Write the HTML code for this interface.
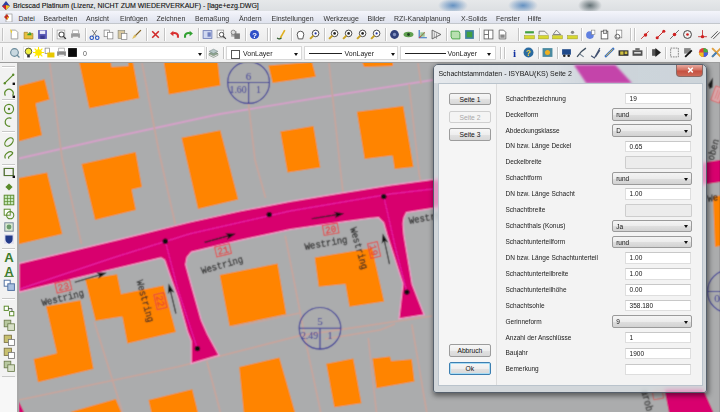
<!DOCTYPE html><html><head><meta charset="utf-8"><style>

*{margin:0;padding:0;box-sizing:border-box}
html,body{width:720px;height:412px;overflow:hidden;background:#f0f0f0;font-family:"Liberation Sans", sans-serif}
.abs{position:absolute}
svg{display:block}
#map{position:absolute;left:0;top:0;width:720px;height:412px;clip-path:polygon(19px 63.2px,720px 63.2px,720px 412px,19px 412px)}
#title{position:absolute;left:0;top:0;width:720px;height:11.5px;background:linear-gradient(#e6e8ea,#dcdfe2);border-bottom:1px solid #aeb3b8;font-size:7px;color:#111;line-height:11px;-webkit-text-stroke:0.12px #111}
#menu{position:absolute;left:0;top:11px;width:720px;height:13px;background:linear-gradient(#f4f5fb,#dfe3ee);border-bottom:1px solid #c3c7cc;font-size:7px;color:#333;line-height:13px}
#menu span{position:absolute;top:0.6px}
#tb1{position:absolute;left:0;top:24px;width:720px;height:19px;background:linear-gradient(#f6f6f6,#ececec);border-bottom:1px solid #c9c9c9}
#tb2{position:absolute;left:0;top:43px;width:720px;height:20.3px;background:linear-gradient(#f7f7f7,#efefef);border-bottom:1.7px solid #9c9c9c}
#lt{position:absolute;left:0;top:63.2px;width:19px;height:350px;background:#f2f2f2;border-right:2px solid #a8a8a8}
.sep{position:absolute;width:2px;background:#c4c4c4;border-right:1px solid #fff}
.hsep{position:absolute;height:2px;background:#c8c8c8;border-bottom:1px solid #fff}
.ic{position:absolute;width:10px;height:10px}
.dd{position:absolute;background:#fff;border:1px solid #d8d8d8;font-size:7px;color:#222;line-height:13px}
.arr{position:absolute;width:0;height:0;border-left:2.5px solid transparent;border-right:2.5px solid transparent;border-top:3px solid #111}

</style></head><body><div id="wrap" style="position:absolute;left:0;top:0;width:720px;height:412px">
<div id="map"><svg width="720" height="412" viewBox="0 0 720 412"><defs><filter id="sb" x="0" y="0" width="1" height="1"><feConvolveMatrix order="3" kernelMatrix="1 2 1 2 8 2 1 2 1" divisor="20" edgeMode="duplicate" preserveAlpha="true"/></filter></defs><g filter="url(#sb)"><rect x="0" y="0" width="720" height="412" fill="#abacad"/><polyline points="19,158.5 100,140 220,114 320,97.5 433,80" fill="none" stroke="#d4a0c8" stroke-width="1.8" opacity="1"/><polyline points="49.7,63 62,158 81.5,244" fill="none" stroke="#c8a49c" stroke-width="1.6" opacity="1"/><polyline points="142,63 158.6,150 175.2,224" fill="none" stroke="#c8a49c" stroke-width="1.6" opacity="1"/><polyline points="248.4,103 255,160 265.6,198" fill="none" stroke="#c8a49c" stroke-width="1.6" opacity="1"/><polyline points="329,63 341,175 344,200" fill="none" stroke="#c8a49c" stroke-width="1.6" opacity="1"/><polyline points="418,63 421,84" fill="none" stroke="#c8a49c" stroke-width="1.6" opacity="1"/><polyline points="409,84 419.3,175 421,182" fill="none" stroke="#c8a49c" stroke-width="1.6" opacity="1"/><polyline points="285.2,235.6 298.4,303.4 307.2,348.9 320.7,412" fill="none" stroke="#c8a49c" stroke-width="1.6" opacity="1"/><polyline points="94.3,321.7 122.4,412" fill="none" stroke="#c8a49c" stroke-width="1.6" opacity="1"/><polyline points="206.9,361.3 220.3,412" fill="none" stroke="#c8a49c" stroke-width="1.6" opacity="1"/><polyline points="368.3,338 376.4,412" fill="none" stroke="#c8a49c" stroke-width="1.6" opacity="1"/><polyline points="411.8,324.4 426.7,412" fill="none" stroke="#c8a49c" stroke-width="1.6" opacity="1"/><polyline points="19,400 178,366.7 300,335.6 432,316" fill="none" stroke="#c8a49c" stroke-width="1.6" opacity="1"/><polyline points="232,327 300,313" fill="none" stroke="#c8a49c" stroke-width="1.6" opacity="1"/><polyline points="325,339 380,330 395,324" fill="none" stroke="#c8a49c" stroke-width="1.6" opacity="1"/><polygon points="18.6,86 44.6,79.2 49.7,99.6 35.7,103.4 42,135.3 18.6,141.6" fill="#ff8400"/><polygon points="79,62 133,62 139.5,98.3 89.2,108.5" fill="#ff8400"/><polygon points="163.7,62 217.8,62 220.4,85.6 168.8,94.5" fill="#ff8400"/><polygon points="268.4,65.5 312.1,62 315.9,76.7 272.6,83" fill="#ff8400"/><polygon points="362,62 393,62 393,66 364,67" fill="#ff8400"/><polygon points="356.8,111.8 403.3,105.9 413.5,167 394.6,169.1 392.5,155.4 364.6,158.9" fill="#ff8400"/><polygon points="280.3,131.4 313.5,126 320.4,167.5 287.5,172.5" fill="#ff8400"/><polygon points="181.5,137.8 220.4,130.2 238.3,199.5 198,209.1" fill="#ff8400"/><polygon points="18.6,178 47.1,172.4 62.4,234.1 18.6,244.3" fill="#ff8400"/><polygon points="81.5,164 135.7,152 142,187 131.8,189.5 135.9,210 95,220" fill="#ff8400"/><polygon points="46,306.2 80.5,300.3 93.6,368.9 38,382.2 33.6,358.9 56.9,353.3" fill="#ff8400"/><polygon points="85.2,279.4 117.1,274.3 121.2,293.9 163.5,285.6 175.9,332 127.4,343.4 122.3,316.5 95.5,320.7" fill="#ff8400"/><polygon points="70.2,412 115.8,398.9 121.3,412" fill="#ff8400"/><polygon points="219.7,275 277.6,263.6 286.3,314.3 229.5,326.3" fill="#ff8400"/><polygon points="314.7,257.4 372.1,248.1 384.2,301.5 349.4,306.8 345.4,284.1 318.7,286.8" fill="#ff8400"/><polygon points="326.2,363.8 353.3,358.4 361.5,403.2 334.3,407.3" fill="#ff8400"/><polygon points="372.4,358.4 390,356.5 391.4,361.1 411.8,359.2 414.5,381.5 376.4,388.3" fill="#ff8400"/><polygon points="239.2,366.9 279.4,357.5 295,412 243.7,412" fill="#ff8400"/><polygon points="148.5,400 192.3,389.2 197.9,412 151.3,412" fill="#ff8400"/><polygon points="713,196.5 720,195.5 720,246 715,247" fill="#ff8400"/><polygon points="111,62 128,62 128.5,66 111.5,67" fill="#abacad"/><polygon points="19,263.4 118,239.7 190,222 240,211 290,201.4 340,193.2 390,185.2 433,179.4 520,172 707,162.7 707,184.5 520,199 432.9,208.3 406.5,212.6 404,217.7 403.1,223.6 404,235 412.2,284.1 424.2,314.8 398.9,318.9 402.9,284.1 387,235 383.6,222.8 378.5,217.7 370,218.4 340,222.4 290,229.7 240,240.3 191.5,252.1 187.1,257.2 185.7,264.5 188.6,275 201.3,320 207.5,334 219.1,355.3 191.2,363.6 191.2,341 187.4,331.6 178,298 169.7,275 164.6,260.1 161,257.8 110,270 19,292.2" fill="#d8006e" stroke="#f0a0cc" stroke-width="1.2"/><polygon points="700,163 720,160 720,182 700,185" fill="#d8006e"/><polygon points="664.4,389 703,389 713.3,412 668.9,412" fill="#d8006e"/><polygon points="18.6,401 24,412 18.6,412" fill="#d8006e"/><polyline points="20,289 110,258.7 190,233.7 290,211 390,194 433,189" fill="none" stroke="#e41aa2" stroke-width="1.5"/><polyline points="165.3,241.2 178,290 197.4,348.6" fill="none" stroke="#e41aa2" stroke-width="1.3"/><polyline points="383.8,196.6 396,250 406.9,292.1" fill="none" stroke="#e41aa2" stroke-width="1.3"/><circle cx="165.3" cy="241.2" r="2.7" fill="#0a0a0a"/><circle cx="269.2" cy="214.6" r="2.7" fill="#0a0a0a"/><circle cx="383.8" cy="196.6" r="2.7" fill="#0a0a0a"/><circle cx="197.4" cy="348.6" r="2.7" fill="#0a0a0a"/><circle cx="406.9" cy="292.1" r="2.7" fill="#0a0a0a"/><line x1="74.8" y1="282.2" x2="101.04323439366138" y2="274.49104989686197" stroke="#1a1a1a" stroke-width="1.1"/><polygon points="106.8,272.8 98.1354680993764,278.7846375782562 99.60404299207673,274.9138123710775 96.27531321282822,272.45219541128375" fill="#111"/><line x1="204.6" y1="242.4" x2="230.0157166449386" y2="235.39438579658744" stroke="#1a1a1a" stroke-width="1.1"/><polygon points="235.8,233.8 227.03643992968748,239.63866550626284 228.56964580617327,235.7929822457343 225.28261555344127,233.2759538156953" fill="#111"/><line x1="311.8" y1="218.7" x2="338.2786995557043" y2="214.3686077887274" stroke="#1a1a1a" stroke-width="1.1"/><polygon points="344.2,213.4 334.86390020997385,218.2710615589083 336.7983744446303,214.61075973590923 333.79843164237377,211.75763107018298" fill="#111"/><line x1="175.9" y1="313.5" x2="170.1046645196077" y2="289.43325960225974" stroke="#1a1a1a" stroke-width="1.1"/><polygon points="168.7,283.6 174.24940031392234,292.54953385131535 170.4558306495096,290.89157450282465 167.83281475143664,294.09466482288383" fill="#111"/><line x1="389.5" y1="264.1" x2="384.079333846993" y2="239.26202225413195" stroke="#1a1a1a" stroke-width="1.1"/><polygon points="382.8,233.4 388.1563353180942,242.4664034743738 384.3991673087412,240.72752781766494 381.70811083854903,243.87367070606604" fill="#111"/><polygon points="713,77.5 708,84.5 709.5,89 712.5,87.5" fill="#1a1a1a"/><g transform="translate(63.4,286.5) rotate(-13)"><rect x="-7.5" y="-5" width="15" height="10" fill="none" stroke="#e84040" stroke-width="1"/><text x="0" y="3.3" font-family="Liberation Mono" font-size="9.5" fill="#e83838" text-anchor="middle" stroke="#e83838" stroke-width="0.2">23</text></g><g transform="translate(223,250.3) rotate(-13)"><rect x="-7.5" y="-5" width="15" height="10" fill="none" stroke="#e84040" stroke-width="1"/><text x="0" y="3.3" font-family="Liberation Mono" font-size="9.5" fill="#e83838" text-anchor="middle" stroke="#e83838" stroke-width="0.2">21</text></g><g transform="translate(330.7,229.3) rotate(-10)"><rect x="-7.5" y="-5" width="15" height="10" fill="none" stroke="#e84040" stroke-width="1"/><text x="0" y="3.3" font-family="Liberation Mono" font-size="9.5" fill="#e83838" text-anchor="middle" stroke="#e83838" stroke-width="0.2">20</text></g><g transform="translate(160.4,301.1) rotate(77)"><rect x="-7.5" y="-5" width="15" height="10" fill="none" stroke="#e84040" stroke-width="1"/><text x="0" y="3.3" font-family="Liberation Mono" font-size="9.5" fill="#e83838" text-anchor="middle" stroke="#e83838" stroke-width="0.2">22</text></g><g transform="translate(374.1,250) rotate(77)"><rect x="-7.5" y="-5" width="15" height="10" fill="none" stroke="#e84040" stroke-width="1"/><text x="0" y="3.3" font-family="Liberation Mono" font-size="9.5" fill="#e83838" text-anchor="middle" stroke="#e83838" stroke-width="0.2">19</text></g><g transform="translate(717.5,94.5) rotate(-70)"><rect x="-7.5" y="-4.5" width="15" height="9" fill="#d8a8ac" stroke="#e06060" stroke-width="0.8"/><line x1="-5" y1="-1" x2="5" y2="-1" stroke="#e06060" stroke-width=".6"/><line x1="-5" y1="1.5" x2="5" y2="1.5" stroke="#e06060" stroke-width=".6"/></g><g transform="translate(658,395) rotate(-10)"><rect x="-5" y="-4" width="10" height="8" fill="none" stroke="#e05050" stroke-width="0.7"/></g><text transform="translate(42.6,306) rotate(-13.6)" font-family="Liberation Mono" font-size="10" fill="#222" stroke="#222" stroke-width="0.2" textLength="43.2" lengthAdjust="spacingAndGlyphs">Westring</text><text transform="translate(202.2,274) rotate(-16)" font-family="Liberation Mono" font-size="10" fill="#222" stroke="#222" stroke-width="0.2" textLength="43.2" lengthAdjust="spacingAndGlyphs">Westring</text><text transform="translate(305.3,250) rotate(-10)" font-family="Liberation Mono" font-size="10" fill="#222" stroke="#222" stroke-width="0.2" textLength="43.2" lengthAdjust="spacingAndGlyphs">Westring</text><text transform="translate(409.4,224) rotate(-10)" font-family="Liberation Mono" font-size="10" fill="#222" stroke="#222" stroke-width="0.2" textLength="43.2" lengthAdjust="spacingAndGlyphs">Westring</text><text transform="translate(136.5,281) rotate(74.7)" font-family="Liberation Mono" font-size="10" fill="#222" stroke="#222" stroke-width="0.2" textLength="43.2" lengthAdjust="spacingAndGlyphs">Westring</text><text transform="translate(350,228.5) rotate(73.7)" font-family="Liberation Mono" font-size="10" fill="#222" stroke="#222" stroke-width="0.2" textLength="43.2" lengthAdjust="spacingAndGlyphs">Westring</text><text transform="translate(708,202) rotate(-10)" font-family="Liberation Mono" font-size="10" fill="#222" stroke="#222" stroke-width="0.2" textLength="10.8" lengthAdjust="spacingAndGlyphs">We</text><text transform="translate(713.5,161) rotate(-75)" font-family="Liberation Mono" font-size="10" fill="#222" stroke="#222" stroke-width="0.2" textLength="21.6" lengthAdjust="spacingAndGlyphs">oben</text><text transform="translate(641,391) rotate(75)" font-family="Liberation Mono" font-size="10" fill="#222" stroke="#222" stroke-width="0.2" textLength="21.6" lengthAdjust="spacingAndGlyphs">arob</text><circle cx="248.6" cy="82.5" r="20.9" fill="none" stroke="#323296" stroke-width="1.1"/><line x1="227.7" y1="82.5" x2="269.5" y2="82.5" stroke="#323296" stroke-width="1.1"/><line x1="248.6" y1="82.5" x2="248.6" y2="103.4" stroke="#323296" stroke-width="1.1"/><text x="248.6" y="79.5" font-family="Liberation Serif" font-size="11" fill="#323296" text-anchor="middle">6</text><text x="238.1" y="93.0" font-family="Liberation Serif" font-size="10" fill="#323296" text-anchor="middle" textLength="17.2" lengthAdjust="spacingAndGlyphs">1.60</text><text x="258.6" y="93.0" font-family="Liberation Serif" font-size="10" fill="#323296" text-anchor="middle">1</text><circle cx="320" cy="328.3" r="20.8" fill="none" stroke="#323296" stroke-width="1.1"/><line x1="299.2" y1="328.3" x2="340.8" y2="328.3" stroke="#323296" stroke-width="1.1"/><line x1="320" y1="328.3" x2="320" y2="349.1" stroke="#323296" stroke-width="1.1"/><text x="320" y="325.3" font-family="Liberation Serif" font-size="11" fill="#323296" text-anchor="middle">5</text><text x="309.5" y="338.8" font-family="Liberation Serif" font-size="10" fill="#323296" text-anchor="middle" textLength="17.2" lengthAdjust="spacingAndGlyphs">2.49</text><text x="330" y="338.8" font-family="Liberation Serif" font-size="10" fill="#323296" text-anchor="middle">1</text><circle cx="729" cy="291.5" r="21.5" fill="none" stroke="#323296" stroke-width="1.1"/><line x1="707.5" y1="291.5" x2="750.5" y2="291.5" stroke="#323296" stroke-width="1.1"/><line x1="729" y1="291.5" x2="729" y2="313.0" stroke="#323296" stroke-width="1.1"/><text x="729" y="288.5" font-family="Liberation Serif" font-size="11" fill="#323296" text-anchor="middle"></text><text x="718.5" y="302.0" font-family="Liberation Serif" font-size="10" fill="#323296" text-anchor="middle" textLength="8.6" lengthAdjust="spacingAndGlyphs">0.</text><text x="739" y="302.0" font-family="Liberation Serif" font-size="10" fill="#323296" text-anchor="middle"></text></g></svg></div>
<div id="title"><div class="abs" style="left:438px;top:-2px;width:30px;height:15px;background:radial-gradient(closest-side,rgba(70,125,185,.8),rgba(70,125,185,0))"></div><div class="abs" style="left:508px;top:-2px;width:30px;height:15px;background:radial-gradient(closest-side,rgba(70,125,185,.8),rgba(70,125,185,0))"></div><div class="abs" style="left:578px;top:-2px;width:24px;height:15px;background:radial-gradient(closest-side,rgba(80,95,100,.85),rgba(80,95,100,0))"></div>
<div class="abs" style="left:2px;top:1px;width:8px;height:9px"><svg width="8" height="9"><polygon points="4,0 8,5 4,9 0,5" fill="#2a3fa0"/><polygon points="0,5 4,9 4,4" fill="#d02020"/><polygon points="4,4 8,5 4,9" fill="#f0c020"/></svg></div>
<span class="abs" style="left:13px;top:0">Bricscad Platinum (Lizenz, NICHT ZUM WIEDERVERKAUF) - [lage+ezg.DWG]</span></div>
<div id="menu">
<div class="abs" style="left:4px;top:2px;width:9px;height:9px"><svg width="9" height="9"><rect x="2" y="1" width="6" height="8" fill="#fff" stroke="#888" stroke-width=".6"/><polygon points="0,4 3,1 5,4 3,7" fill="#c03020"/><polygon points="3,4 5,4 3,7" fill="#e8b020"/></svg></div>
<span style="left:18.5px">Datei</span>
<span style="left:43.5px">Bearbeiten</span>
<span style="left:86px">Ansicht</span>
<span style="left:120px">Einfügen</span>
<span style="left:156.5px">Zeichnen</span>
<span style="left:195px">Bemaßung</span>
<span style="left:239px">Ändern</span>
<span style="left:271.5px">Einstellungen</span>
<span style="left:323.5px">Werkzeuge</span>
<span style="left:367.5px">Bilder</span>
<span style="left:394px">RZI-Kanalplanung</span>
<span style="left:461px">X-Solids</span>
<span style="left:496px">Fenster</span>
<span style="left:527.5px">Hilfe</span>
</div>
<div id="tb1"></div>
<div id="tb2"></div>
<div class="abs" style="left:2px;top:28px;width:2px;height:13px;background:#c4c4c4;border-right:1px solid #fafafa"></div>
<div class="abs" style="left:2px;top:47px;width:2px;height:13px;background:#c4c4c4;border-right:1px solid #fafafa"></div>
<div class="abs" style="left:8.9px;top:28.799999999999997px;width:11px;height:11px"><svg width="11" height="11" viewBox="0 0 10 10" style="overflow:visible"><path d="M2,1 h4 l2,2 v6 h-6z" fill="#fff" stroke="#8a8a8a" stroke-width=".7"/><path d="M1,0 l2,2 l-1,2z" fill="#f0d020"/></svg></div>
<div class="abs" style="left:22.5px;top:28.799999999999997px;width:11px;height:11px"><svg width="11" height="11" viewBox="0 0 10 10" style="overflow:visible"><path d="M1,3 h3 l1,1 h4 v5 h-8z" fill="#e8c040" stroke="#9a7a20" stroke-width=".6"/><path d="M4,5 l3,0 l-1,-2" fill="none" stroke="#30a030" stroke-width="1.2"/></svg></div>
<div class="abs" style="left:37.3px;top:28.799999999999997px;width:11px;height:11px"><svg width="11" height="11" viewBox="0 0 10 10" style="overflow:visible"><rect x="1" y="1" width="8" height="8" fill="#5a5ab8"/><rect x="2.5" y="1.5" width="5" height="3" fill="#e8e8f8"/><rect x="3" y="6" width="4" height="3" fill="#3a3a90"/></svg></div>
<div class="abs" style="left:55.9px;top:28.799999999999997px;width:11px;height:11px"><svg width="11" height="11" viewBox="0 0 10 10" style="overflow:visible"><rect x="1" y="1" width="7" height="8" fill="#fff" stroke="#999" stroke-width=".6"/><circle cx="5" cy="5" r="2.3" fill="none" stroke="#555" stroke-width="1"/><line x1="6.7" y1="6.7" x2="9" y2="9" stroke="#333" stroke-width="1.2"/></svg></div>
<div class="abs" style="left:70.0px;top:28.799999999999997px;width:11px;height:11px"><svg width="11" height="11" viewBox="0 0 10 10" style="overflow:visible"><rect x="1" y="4" width="8" height="4" fill="#9a9a9a"/><rect x="2.5" y="1" width="5" height="3" fill="#fff" stroke="#888" stroke-width=".5"/><rect x="2.5" y="7" width="5" height="2" fill="#eee"/></svg></div>
<div class="abs" style="left:88.8px;top:28.799999999999997px;width:11px;height:11px"><svg width="11" height="11" viewBox="0 0 10 10" style="overflow:visible"><line x1="3" y1="1" x2="7" y2="7" stroke="#666" stroke-width=".8"/><line x1="7" y1="1" x2="3" y2="7" stroke="#666" stroke-width=".8"/><circle cx="2.5" cy="8" r="1.6" fill="none" stroke="#2050c0" stroke-width="1"/><circle cx="7.5" cy="8" r="1.6" fill="none" stroke="#2050c0" stroke-width="1"/></svg></div>
<div class="abs" style="left:103.4px;top:28.799999999999997px;width:11px;height:11px"><svg width="11" height="11" viewBox="0 0 10 10" style="overflow:visible"><rect x="1" y="1" width="5" height="6" fill="#fff" stroke="#777" stroke-width=".6"/><rect x="4" y="3" width="5" height="6" fill="#fff" stroke="#777" stroke-width=".6"/></svg></div>
<div class="abs" style="left:117.3px;top:28.799999999999997px;width:11px;height:11px"><svg width="11" height="11" viewBox="0 0 10 10" style="overflow:visible"><rect x="1" y="1.5" width="6" height="7" fill="#d8c8a0" stroke="#887" stroke-width=".6"/><rect x="4" y="4" width="5" height="5.5" fill="#fff" stroke="#777" stroke-width=".6"/></svg></div>
<div class="abs" style="left:131.2px;top:28.799999999999997px;width:11px;height:11px"><svg width="11" height="11" viewBox="0 0 10 10" style="overflow:visible"><line x1="9" y1="1" x2="4" y2="6" stroke="#806020" stroke-width="1.2"/><path d="M1,9 l2,-4 l2,2z" fill="#e0c060"/></svg></div>
<div class="abs" style="left:150.2px;top:28.799999999999997px;width:11px;height:11px"><svg width="11" height="11" viewBox="0 0 10 10" style="overflow:visible"><path d="M2,2 L8,8 M8,2 L2,8" stroke="#d02828" stroke-width="1.4"/></svg></div>
<div class="abs" style="left:169.2px;top:28.799999999999997px;width:11px;height:11px"><svg width="11" height="11" viewBox="0 0 10 10" style="overflow:visible"><path d="M8,8 C9,4 6,3 3,4" fill="none" stroke="#d83030" stroke-width="1.8"/><polygon points="1,4 4,1.5 4,6.5" fill="#d83030"/></svg></div>
<div class="abs" style="left:182.7px;top:28.799999999999997px;width:11px;height:11px"><svg width="11" height="11" viewBox="0 0 10 10" style="overflow:visible"><path d="M2,8 C1,4 4,3 7,4" fill="none" stroke="#30a030" stroke-width="1.8"/><polygon points="9,4 6,1.5 6,6.5" fill="#30a030"/></svg></div>
<div class="abs" style="left:201.7px;top:28.799999999999997px;width:11px;height:11px"><svg width="11" height="11" viewBox="0 0 10 10" style="overflow:visible"><rect x="1" y="1.5" width="8" height="7" fill="#d0d8f0" stroke="#6070b0" stroke-width=".7"/><rect x="5" y="3" width="3" height="4" fill="#7080c0"/></svg></div>
<div class="abs" style="left:216.1px;top:28.799999999999997px;width:11px;height:11px"><svg width="11" height="11" viewBox="0 0 10 10" style="overflow:visible"><rect x="1" y="1" width="6" height="7" fill="#fff" stroke="#888" stroke-width=".6"/><circle cx="5" cy="5" r="2" fill="none" stroke="#555" stroke-width=".9"/><line x1="6.5" y1="6.5" x2="9" y2="9" stroke="#444" stroke-width="1"/></svg></div>
<div class="abs" style="left:229.6px;top:28.799999999999997px;width:11px;height:11px"><svg width="11" height="11" viewBox="0 0 10 10" style="overflow:visible"><rect x="1" y="2" width="5" height="5" fill="#aaa"/><rect x="4" y="4" width="5" height="5" fill="#777"/><circle cx="3" cy="3" r="2" fill="#ddd" stroke="#555" stroke-width=".5"/></svg></div>
<div class="abs" style="left:249.0px;top:28.799999999999997px;width:11px;height:11px"><svg width="11" height="11" viewBox="0 0 10 10" style="overflow:visible"><circle cx="5" cy="5" r="4.2" fill="#3050c8"/><text x="5" y="7.8" font-size="7" font-family="Liberation Sans" font-weight="bold" fill="#fff" text-anchor="middle">?</text></svg></div>
<div class="abs" style="left:276.1px;top:28.799999999999997px;width:11px;height:11px"><svg width="11" height="11" viewBox="0 0 10 10" style="overflow:visible"><path d="M8,1 L4,8" stroke="#e0b020" stroke-width="1.5"/><path d="M1,8 q2,2 4,0" fill="none" stroke="#205020" stroke-width="1"/></svg></div>
<div class="abs" style="left:295.1px;top:28.799999999999997px;width:11px;height:11px"><svg width="11" height="11" viewBox="0 0 10 10" style="overflow:visible"><path d="M2,5 q0,-3 3,-3 q3,0 3,3 l-1,4 h-4z" fill="#fff" stroke="#444" stroke-width=".8"/></svg></div>
<div class="abs" style="left:308.6px;top:28.799999999999997px;width:11px;height:11px"><svg width="11" height="11" viewBox="0 0 10 10" style="overflow:visible"><circle cx="6" cy="4" r="3" fill="#fff" stroke="#333" stroke-width=".8"/><line x1="4" y1="6" x2="1" y2="9" stroke="#c8a020" stroke-width="1.8"/><circle cx="6" cy="4" r="1" fill="#2030a0"/></svg></div>
<div class="abs" style="left:327.9px;top:28.799999999999997px;width:11px;height:11px"><svg width="11" height="11" viewBox="0 0 10 10" style="overflow:visible"><circle cx="6" cy="4" r="3" fill="#fff" stroke="#333" stroke-width=".8"/><line x1="4" y1="6" x2="1" y2="9" stroke="#c8a020" stroke-width="1.8"/><circle cx="6" cy="4" r="1.2" fill="#222"/></svg></div>
<div class="abs" style="left:342.0px;top:28.799999999999997px;width:11px;height:11px"><svg width="11" height="11" viewBox="0 0 10 10" style="overflow:visible"><circle cx="6" cy="4" r="3" fill="#fff" stroke="#333" stroke-width=".8"/><line x1="4" y1="6" x2="1" y2="9" stroke="#c8a020" stroke-width="1.8"/><circle cx="6" cy="4" r="1.2" fill="#222"/></svg></div>
<div class="abs" style="left:356.1px;top:28.799999999999997px;width:11px;height:11px"><svg width="11" height="11" viewBox="0 0 10 10" style="overflow:visible"><circle cx="6" cy="4" r="3" fill="#fff" stroke="#333" stroke-width=".8"/><line x1="4" y1="6" x2="1" y2="9" stroke="#c8a020" stroke-width="1.8"/><circle cx="6" cy="4" r="1.2" fill="#222"/></svg></div>
<div class="abs" style="left:370.3px;top:28.799999999999997px;width:11px;height:11px"><svg width="11" height="11" viewBox="0 0 10 10" style="overflow:visible"><circle cx="6" cy="4" r="3" fill="#fff" stroke="#333" stroke-width=".8"/><line x1="4" y1="6" x2="1" y2="9" stroke="#c8a020" stroke-width="1.8"/><circle cx="6" cy="4" r="1" fill="#2030a0"/></svg></div>
<div class="abs" style="left:389.4px;top:28.799999999999997px;width:11px;height:11px"><svg width="11" height="11" viewBox="0 0 10 10" style="overflow:visible"><circle cx="5" cy="5" r="4" fill="#30407a"/><circle cx="5" cy="5" r="1.5" fill="#8090c0"/></svg></div>
<div class="abs" style="left:402.9px;top:28.799999999999997px;width:11px;height:11px"><svg width="11" height="11" viewBox="0 0 10 10" style="overflow:visible"><ellipse cx="5" cy="5" rx="4.5" ry="2.5" fill="#60a050"/><circle cx="5" cy="5" r="1.3" fill="#204020"/></svg></div>
<div class="abs" style="left:417.4px;top:28.799999999999997px;width:11px;height:11px"><svg width="11" height="11" viewBox="0 0 10 10" style="overflow:visible"><path d="M2,1 v7 h7" fill="none" stroke="#3070c0" stroke-width="1"/><path d="M2,8 l5,-5" stroke="#d04040" stroke-width="1"/><rect x="3" y="3" width="4" height="4" fill="#60b060" opacity=".6"/></svg></div>
<div class="abs" style="left:430.9px;top:28.799999999999997px;width:11px;height:11px"><svg width="11" height="11" viewBox="0 0 10 10" style="overflow:visible"><path d="M1,9 L1,1 L9,5z" fill="none" stroke="#555" stroke-width=".8"/><path d="M3,3 v5 M5,4 v5" stroke="#777" stroke-width=".6"/></svg></div>
<div class="abs" style="left:449.9px;top:28.799999999999997px;width:11px;height:11px"><svg width="11" height="11" viewBox="0 0 10 10" style="overflow:visible"><path d="M1,2 h7 l1,2 v5 h-7 l-1,-2z" fill="#b8e0b0" stroke="#40a040" stroke-width=".8"/></svg></div>
<div class="abs" style="left:464.3px;top:28.799999999999997px;width:11px;height:11px"><svg width="11" height="11" viewBox="0 0 10 10" style="overflow:visible"><rect x="1" y="1" width="8" height="8" fill="#4080a0"/><rect x="2.5" y="2.5" width="5" height="5" fill="#40a040"/></svg></div>
<div class="abs" style="left:483.3px;top:28.799999999999997px;width:11px;height:11px"><svg width="11" height="11" viewBox="0 0 10 10" style="overflow:visible"><rect x="1" y="1" width="8" height="8" fill="#fff" stroke="#666" stroke-width=".8"/><line x1="5" y1="1" x2="5" y2="9" stroke="#666" stroke-width=".8"/><line x1="1" y1="5" x2="5" y2="5" stroke="#666" stroke-width=".8"/></svg></div>
<div class="abs" style="left:497.0px;top:28.799999999999997px;width:11px;height:11px"><svg width="11" height="11" viewBox="0 0 10 10" style="overflow:visible"><path d="M2,1 h4 l2,2 v6 h-6z" fill="#fff" stroke="#666" stroke-width=".8"/><rect x="3" y="5" width="4" height="3" fill="#888"/></svg></div>
<div class="abs" style="left:524.3px;top:28.799999999999997px;width:11px;height:11px"><svg width="11" height="11" viewBox="0 0 10 10" style="overflow:visible"><rect x="0.5" y="6" width="9" height="3" fill="#d8d830" stroke="#909020" stroke-width=".4"/><rect x="1" y="2" width="8" height="2" fill="#40a040"/></svg></div>
<div class="abs" style="left:537.8px;top:28.799999999999997px;width:11px;height:11px"><svg width="11" height="11" viewBox="0 0 10 10" style="overflow:visible"><rect x="0.5" y="6" width="9" height="3" fill="#d8d830" stroke="#909020" stroke-width=".4"/><path d="M1,5 v-3 h5 l3,3" fill="none" stroke="#666" stroke-width=".7"/></svg></div>
<div class="abs" style="left:552.3px;top:28.799999999999997px;width:11px;height:11px"><svg width="11" height="11" viewBox="0 0 10 10" style="overflow:visible"><rect x="0.5" y="6" width="9" height="3" fill="#d8d830" stroke="#909020" stroke-width=".4"/><path d="M1,5 l3,-4 l4,4z" fill="none" stroke="#666" stroke-width=".7"/></svg></div>
<div class="abs" style="left:566.7px;top:28.799999999999997px;width:11px;height:11px"><svg width="11" height="11" viewBox="0 0 10 10" style="overflow:visible"><rect x="0.5" y="6" width="9" height="3" fill="#d8d830" stroke="#909020" stroke-width=".4"/><circle cx="5" cy="3" r="1.5" fill="#888"/></svg></div>
<div class="abs" style="left:584.8px;top:28.799999999999997px;width:11px;height:11px"><svg width="11" height="11" viewBox="0 0 10 10" style="overflow:visible"><circle cx="4.5" cy="5.5" r="3.5" fill="#6080e0"/><rect x="6" y="1" width="3" height="4" fill="#fff" stroke="#777" stroke-width=".5"/></svg></div>
<div class="abs" style="left:599.2px;top:28.799999999999997px;width:11px;height:11px"><svg width="11" height="11" viewBox="0 0 10 10" style="overflow:visible"><rect x="2" y="2" width="6" height="7" fill="#fff" stroke="#555" stroke-width=".8"/><rect x="4" y="1" width="3" height="3" fill="#ddd" stroke="#555" stroke-width=".6"/></svg></div>
<div class="abs" style="left:613.3px;top:28.799999999999997px;width:11px;height:11px"><svg width="11" height="11" viewBox="0 0 10 10" style="overflow:visible"><rect x="3" y="1" width="5" height="7" fill="#fff" stroke="#777" stroke-width=".6"/><circle cx="4" cy="7" r="2.2" fill="none" stroke="#666" stroke-width=".9"/></svg></div>
<div class="abs" style="left:640.1px;top:28.799999999999997px;width:11px;height:11px"><svg width="11" height="11" viewBox="0 0 10 10" style="overflow:visible"><line x1="1" y1="9" x2="8" y2="2" stroke="#c03030" stroke-width=".8"/><circle cx="5" cy="5.5" r="1.6" fill="#d02020"/></svg></div>
<div class="abs" style="left:654.7px;top:28.799999999999997px;width:11px;height:11px"><svg width="11" height="11" viewBox="0 0 10 10" style="overflow:visible"><line x1="2" y1="8" x2="8" y2="2" stroke="#c03030" stroke-width=".9"/><circle cx="2" cy="8" r="1.4" fill="#d02020"/><circle cx="8" cy="2" r="1.4" fill="#d02020"/></svg></div>
<div class="abs" style="left:668.5px;top:28.799999999999997px;width:11px;height:11px"><svg width="11" height="11" viewBox="0 0 10 10" style="overflow:visible"><line x1="1" y1="9" x2="9" y2="1" stroke="#555" stroke-width=".8"/><circle cx="5" cy="5" r="1.6" fill="#d02020"/></svg></div>
<div class="abs" style="left:682.4px;top:28.799999999999997px;width:11px;height:11px"><svg width="11" height="11" viewBox="0 0 10 10" style="overflow:visible"><circle cx="5" cy="5" r="3.6" fill="none" stroke="#444" stroke-width=".9"/><circle cx="5" cy="5" r="1.2" fill="#d02020"/></svg></div>
<div class="abs" style="left:697.0px;top:28.799999999999997px;width:11px;height:11px"><svg width="11" height="11" viewBox="0 0 10 10" style="overflow:visible"><line x1="5" y1="1" x2="5" y2="7" stroke="#c03030" stroke-width=".8"/><line x1="1" y1="7" x2="9" y2="7" stroke="#c03030" stroke-width=".8"/><circle cx="5" cy="7" r="1.5" fill="#d02020"/></svg></div>
<div class="abs" style="left:710.1px;top:28.799999999999997px;width:11px;height:11px"><svg width="11" height="11" viewBox="0 0 10 10" style="overflow:visible"><line x1="1" y1="8" x2="7" y2="2" stroke="#555" stroke-width=".9"/><line x1="3" y1="9" x2="9" y2="3" stroke="#555" stroke-width=".9"/></svg></div>
<div class="sep" style="left:51.5px;top:28px;height:13px"></div>
<div class="sep" style="left:84.9px;top:28px;height:13px"></div>
<div class="sep" style="left:146.3px;top:28px;height:13px"></div>
<div class="sep" style="left:164.4px;top:28px;height:13px"></div>
<div class="sep" style="left:198.1px;top:28px;height:13px"></div>
<div class="sep" style="left:245px;top:28px;height:13px"></div>
<div class="sep" style="left:267px;top:28px;height:13px"></div>
<div class="sep" style="left:270px;top:28px;height:13px"></div>
<div class="sep" style="left:291.2px;top:28px;height:13px"></div>
<div class="sep" style="left:323.7px;top:28px;height:13px"></div>
<div class="sep" style="left:385px;top:28px;height:13px"></div>
<div class="sep" style="left:446.3px;top:28px;height:13px"></div>
<div class="sep" style="left:479.4px;top:28px;height:13px"></div>
<div class="sep" style="left:518px;top:28px;height:13px"></div>
<div class="sep" style="left:581.3px;top:28px;height:13px"></div>
<div class="sep" style="left:630.3px;top:28px;height:13px"></div>
<div class="sep" style="left:634px;top:28px;height:13px"></div>
<div class="dd" style="left:23px;top:46px;width:182px;height:14px;border-color:#e4e4e4"><span class="abs" style="left:59px;top:0;color:#555">0</span><div class="arr" style="left:174px;top:6px"></div></div>
<div class="dd" style="left:226px;top:46px;width:76px;height:14px"><div class="abs" style="left:4px;top:2.5px;width:9px;height:9px;border:1px solid #555;background:#fff"></div><span class="abs" style="left:16px;top:0">VonLayer</span><div class="arr" style="left:67px;top:6px"></div></div>
<div class="dd" style="left:303.5px;top:46px;width:94px;height:14px"><div class="abs" style="left:4px;top:6px;width:33px;height:1px;background:#222"></div><span class="abs" style="left:40px;top:0">VonLayer</span><div class="arr" style="left:86px;top:6px"></div></div>
<div class="dd" style="left:399.5px;top:46px;width:96px;height:14px"><div class="abs" style="left:4px;top:6px;width:41px;height:1px;background:#222"></div><span class="abs" style="left:47px;top:0">VonLayer</span><div class="arr" style="left:86px;top:6px"></div></div>
<div class="abs" style="left:8.9px;top:47.2px;width:11px;height:11px"><svg width="11" height="11" viewBox="0 0 10 10" style="overflow:visible"><circle cx="5" cy="5" r="3.5" fill="#c8d8e0" stroke="#6a8a9a" stroke-width="1"/><line x1="7" y1="7" x2="9.5" y2="9.5" stroke="#6a8a9a" stroke-width="1.2"/></svg></div>
<div class="abs" style="left:23.0px;top:47.2px;width:11px;height:11px"><svg width="11" height="11" viewBox="0 0 10 10" style="overflow:visible"><circle cx="5" cy="4" r="3" fill="#f0f040" stroke="#333" stroke-width=".7"/><rect x="3.8" y="7" width="2.4" height="2.5" fill="#333"/></svg></div>
<div class="abs" style="left:32.8px;top:47.2px;width:11px;height:11px"><svg width="11" height="11" viewBox="0 0 10 10" style="overflow:visible"><circle cx="5" cy="5" r="3" fill="#ffe800"/><path d="M5,0 v10 M0,5 h10 M1.5,1.5 l7,7 M8.5,1.5 l-7,7" stroke="#ffe800" stroke-width="1"/></svg></div>
<div class="abs" style="left:44.2px;top:47.2px;width:11px;height:11px"><svg width="11" height="11" viewBox="0 0 10 10" style="overflow:visible"><rect x="1" y="1" width="4" height="5" fill="#fff" stroke="#777" stroke-width=".6"/><rect x="3" y="5" width="6.5" height="4.5" fill="#e8c800"/></svg></div>
<div class="abs" style="left:55.5px;top:47.2px;width:11px;height:11px"><svg width="11" height="11" viewBox="0 0 10 10" style="overflow:visible"><rect x="1" y="4" width="8" height="4" fill="#8a8a8a"/><rect x="2.5" y="1" width="5" height="3" fill="#fff" stroke="#888" stroke-width=".5"/><rect x="2.5" y="7" width="5" height="2" fill="#eee"/></svg></div>
<div class="abs" style="left:67.1px;top:47.2px;width:11px;height:11px"><svg width="11" height="11" viewBox="0 0 10 10" style="overflow:visible"><rect x="1" y="1" width="8" height="8" fill="#0a0a0a"/></svg></div>
<div class="abs" style="left:208.0px;top:47.2px;width:11px;height:11px"><svg width="11" height="11" viewBox="0 0 10 10" style="overflow:visible"><path d="M1,6 l4,-2 l4,2 l-4,2z" fill="#90a890" stroke="#607060" stroke-width=".5"/><path d="M1,4 l4,-2 l4,2 l-4,2z" fill="#b8c8c8" stroke="#708080" stroke-width=".5"/><path d="M1,6 v1.5 l4,2 l4,-2 v-1.5" fill="none" stroke="#607060" stroke-width=".5"/></svg></div>
<div class="abs" style="left:508.9px;top:47.2px;width:11px;height:11px"><svg width="11" height="11" viewBox="0 0 10 10" style="overflow:visible"><text x="5" y="9" font-size="10" font-family="Liberation Serif" font-weight="bold" fill="#1030a0" text-anchor="middle">i</text></svg></div>
<div class="abs" style="left:523.4px;top:47.2px;width:11px;height:11px"><svg width="11" height="11" viewBox="0 0 10 10" style="overflow:visible"><circle cx="5" cy="5" r="4.5" fill="#2a6aa0"/><text x="5" y="8" font-size="7.5" font-family="Liberation Sans" font-weight="bold" fill="#f0d040" text-anchor="middle">?</text></svg></div>
<div class="abs" style="left:542.4px;top:47.2px;width:11px;height:11px"><svg width="11" height="11" viewBox="0 0 10 10" style="overflow:visible"><rect x="0.5" y="1" width="9" height="8" fill="#4a8aa0"/><circle cx="5" cy="5" r="2.3" fill="#f0b020"/></svg></div>
<div class="abs" style="left:561.3px;top:47.2px;width:11px;height:11px"><svg width="11" height="11" viewBox="0 0 10 10" style="overflow:visible"><rect x="1" y="2" width="8" height="5" fill="#204a8a"/><circle cx="3" cy="8" r="1.2" fill="#222"/><circle cx="7" cy="8" r="1.2" fill="#222"/></svg></div>
<div class="abs" style="left:575.8px;top:47.2px;width:11px;height:11px"><svg width="11" height="11" viewBox="0 0 10 10" style="overflow:visible"><path d="M1,9 l4,-5 l4,-3" stroke="#405060" stroke-width="1.2" fill="none"/><path d="M3,6 l4,3" stroke="#6a7a8a" stroke-width="1"/></svg></div>
<div class="abs" style="left:590.2px;top:47.2px;width:11px;height:11px"><svg width="11" height="11" viewBox="0 0 10 10" style="overflow:visible"><path d="M1,8 l3,2 l5,-9 M5,9 l4,-6" stroke="#405070" stroke-width="1" fill="none"/></svg></div>
<div class="abs" style="left:603.7px;top:47.2px;width:11px;height:11px"><svg width="11" height="11" viewBox="0 0 10 10" style="overflow:visible"><path d="M1,9 L9,1" stroke="#3a70c0" stroke-width="2"/><path d="M2,8 L8,2" stroke="#e8c040" stroke-width=".8"/></svg></div>
<div class="abs" style="left:618.2px;top:47.2px;width:11px;height:11px"><svg width="11" height="11" viewBox="0 0 10 10" style="overflow:visible"><rect x="0.5" y="3" width="9" height="5" fill="#303030"/><rect x="2" y="4" width="3" height="3" fill="#d0c040"/><rect x="6" y="4" width="2.5" height="2.5" fill="#d0c040"/></svg></div>
<div class="abs" style="left:632.1px;top:47.2px;width:11px;height:11px"><svg width="11" height="11" viewBox="0 0 10 10" style="overflow:visible"><rect x="0.5" y="3" width="9" height="5" fill="#505050"/><rect x="3" y="1" width="4" height="2" fill="#707070"/><rect x="2" y="4.5" width="6" height="1.5" fill="#ddd"/></svg></div>
<div class="abs" style="left:651.1px;top:47.2px;width:11px;height:11px"><svg width="11" height="11" viewBox="0 0 10 10" style="overflow:visible"><rect x="1" y="2" width="4" height="6" fill="#555"/><polygon points="4,1 9,5 4,9" fill="#222"/></svg></div>
<div class="abs" style="left:669.3px;top:47.2px;width:11px;height:11px"><svg width="11" height="11" viewBox="0 0 10 10" style="overflow:visible"><rect x="1.5" y="1" width="7" height="8" fill="#f4f4f4" stroke="#666" stroke-width=".7" stroke-dasharray="1.5 .8"/></svg></div>
<div class="abs" style="left:683.1px;top:47.2px;width:11px;height:11px"><svg width="11" height="11" viewBox="0 0 10 10" style="overflow:visible"><rect x="1" y="1" width="6" height="5" fill="#888"/><path d="M2,9 l6,-6" stroke="#111" stroke-width="1.6"/></svg></div>
<div class="abs" style="left:697.7px;top:47.2px;width:11px;height:11px"><svg width="11" height="11" viewBox="0 0 10 10" style="overflow:visible"><circle cx="5" cy="5" r="4.2" fill="#e04040"/><path d="M5,5 L5,0.8 A4.2,4.2 0 0 1 9.2,5z" fill="#40b040"/><path d="M5,5 L9.2,5 A4.2,4.2 0 0 1 5,9.2z" fill="#4060e0"/><path d="M5,5 L5,9.2 A4.2,4.2 0 0 1 0.8,5z" fill="#f0c020"/></svg></div>
<div class="abs" style="left:710.9px;top:47.2px;width:11px;height:11px"><svg width="11" height="11" viewBox="0 0 10 10" style="overflow:visible"><path d="M1,9 L9,1 M1,1 L9,9" stroke="#e0a040" stroke-width="1.8"/><path d="M1,9 L5,5" stroke="#4080c0" stroke-width="1.8"/></svg></div>
<div class="sep" style="left:205.5px;top:47px;height:12px"></div>
<div class="sep" style="left:222.5px;top:47px;height:12px"></div>
<div class="sep" style="left:499.6px;top:47px;height:12px"></div>
<div class="sep" style="left:503.6px;top:47px;height:12px"></div>
<div class="sep" style="left:537.9px;top:47px;height:12px"></div>
<div class="sep" style="left:556.9px;top:47px;height:12px"></div>
<div class="sep" style="left:646.4px;top:47px;height:12px"></div>
<div class="sep" style="left:665.3px;top:47px;height:12px"></div>
<div id="lt"></div>
<div class="hsep" style="left:2px;top:66px;width:13px"></div>
<div class="abs" style="left:2.5px;top:72.6px;width:12px;height:12px"><svg width="12" height="12" viewBox="0 0 10 10" style="overflow:visible"><line x1="1.5" y1="8.5" x2="8.5" y2="1.5" stroke="#5a8a2a" stroke-width="1"/><circle cx="1.5" cy="8.5" r="1" fill="#5a8a2a"/><circle cx="8.5" cy="1.5" r="1" fill="#5a8a2a"/><rect x="8" y="8" width="2" height="2" fill="#111"/></svg></div>
<div class="abs" style="left:2.5px;top:85.8px;width:12px;height:12px"><svg width="12" height="12" viewBox="0 0 10 10" style="overflow:visible"><path d="M2,8 A3.5,3.5 0 1 1 8,8" fill="none" stroke="#5a8a2a" stroke-width="1"/><rect x="8" y="8" width="2" height="2" fill="#111"/></svg></div>
<div class="abs" style="left:2.5px;top:103.3px;width:12px;height:12px"><svg width="12" height="12" viewBox="0 0 10 10" style="overflow:visible"><circle cx="5" cy="5" r="3.8" fill="none" stroke="#5a8a2a" stroke-width="1"/><circle cx="5" cy="5" r="1" fill="#5a8a2a"/></svg></div>
<div class="abs" style="left:2.5px;top:116.4px;width:12px;height:12px"><svg width="12" height="12" viewBox="0 0 10 10" style="overflow:visible"><path d="M7,2 A3.5,3.5 0 1 0 6,8.5" fill="none" stroke="#5a8a2a" stroke-width="1"/></svg></div>
<div class="abs" style="left:2.5px;top:136.1px;width:12px;height:12px"><svg width="12" height="12" viewBox="0 0 10 10" style="overflow:visible"><ellipse cx="5" cy="5" rx="4.2" ry="2.6" transform="rotate(-45 5 5)" fill="none" stroke="#5a8a2a" stroke-width="1"/></svg></div>
<div class="abs" style="left:2.5px;top:148.9px;width:12px;height:12px"><svg width="12" height="12" viewBox="0 0 10 10" style="overflow:visible"><path d="M2,8 C0,4 6,1 8,3 C9,5 3,6 5,8" fill="none" stroke="#5a8a2a" stroke-width="1"/></svg></div>
<div class="abs" style="left:2.5px;top:166.4px;width:12px;height:12px"><svg width="12" height="12" viewBox="0 0 10 10" style="overflow:visible"><rect x="1" y="2" width="7.5" height="6" fill="none" stroke="#333" stroke-width=".8"/><rect x="1" y="2" width="7.5" height="6" fill="none" stroke="#5a8a2a" stroke-width=".6"/><rect x="8" y="8" width="2" height="2" fill="#111"/></svg></div>
<div class="abs" style="left:2.5px;top:180.6px;width:12px;height:12px"><svg width="12" height="12" viewBox="0 0 10 10" style="overflow:visible"><path d="M5,2 L8,5 L5,8 L2,5z" fill="#5a8a2a"/></svg></div>
<div class="abs" style="left:2.5px;top:193.7px;width:12px;height:12px"><svg width="12" height="12" viewBox="0 0 10 10" style="overflow:visible"><rect x="1" y="1" width="8" height="8" fill="#c8e8c0" stroke="#5a8a2a" stroke-width=".8"/><path d="M1,3.7 h8 M1,6.3 h8 M3.7,1 v8 M6.3,1 v8" stroke="#5a8a2a" stroke-width=".6"/></svg></div>
<div class="abs" style="left:2.5px;top:208.0px;width:12px;height:12px"><svg width="12" height="12" viewBox="0 0 10 10" style="overflow:visible"><rect x="1" y="1" width="5" height="5" fill="#fff" stroke="#5a8a2a" stroke-width=".8"/><circle cx="6" cy="6" r="3" fill="none" stroke="#5a8a2a" stroke-width=".9"/></svg></div>
<div class="abs" style="left:2.5px;top:221.1px;width:12px;height:12px"><svg width="12" height="12" viewBox="0 0 10 10" style="overflow:visible"><rect x="1.5" y="1.5" width="7" height="7" fill="#d8e8d0" stroke="#789" stroke-width=".8"/><circle cx="5" cy="5" r="2" fill="#6a9a6a"/></svg></div>
<div class="abs" style="left:2.5px;top:232.8px;width:12px;height:12px"><svg width="12" height="12" viewBox="0 0 10 10" style="overflow:visible"><rect x="1" y="1" width="8" height="8" fill="#dde"/><path d="M2,2 h6 v3 q0,3 -3,4 q-3,-1 -3,-4z" fill="#223a88"/></svg></div>
<div class="abs" style="left:2.5px;top:251.39999999999998px;width:12px;height:12px"><svg width="12" height="12" viewBox="0 0 10 10" style="overflow:visible"><text x="5" y="9.5" font-size="11" font-family="Liberation Sans" font-weight="bold" fill="#3a7a2a" text-anchor="middle">A</text></svg></div>
<div class="abs" style="left:2.5px;top:264.5px;width:12px;height:12px"><svg width="12" height="12" viewBox="0 0 10 10" style="overflow:visible"><text x="5" y="9" font-size="10" font-family="Liberation Sans" font-weight="bold" fill="#3a7a2a" text-anchor="middle">A</text><line x1="1" y1="9.5" x2="9" y2="9.5" stroke="#3a7a2a" stroke-width=".8"/></svg></div>
<div class="abs" style="left:2.5px;top:278.7px;width:12px;height:12px"><svg width="12" height="12" viewBox="0 0 10 10" style="overflow:visible"><rect x="1" y="1" width="5" height="5" fill="#fff" stroke="#5070a0" stroke-width=".8"/><rect x="4" y="4" width="5.5" height="5.5" fill="#a8c0e0" stroke="#5070a0" stroke-width=".8"/></svg></div>
<div class="abs" style="left:2.5px;top:305.0px;width:12px;height:12px"><svg width="12" height="12" viewBox="0 0 10 10" style="overflow:visible"><rect x="1" y="1" width="3.5" height="3.5" fill="#fff" stroke="#5a8a2a" stroke-width=".8"/><rect x="5.5" y="5.5" width="3.5" height="3.5" fill="#fff" stroke="#5a8a2a" stroke-width=".8"/><path d="M4.5,3 h3 v2.5" fill="none" stroke="#333" stroke-width=".6"/></svg></div>
<div class="abs" style="left:2.5px;top:318.9px;width:12px;height:12px"><svg width="12" height="12" viewBox="0 0 10 10" style="overflow:visible"><rect x="1" y="1" width="5.5" height="5.5" fill="#b8c8a0" stroke="#6a7a4a" stroke-width=".7"/><rect x="4" y="4" width="5.5" height="5.5" fill="#d8e0c8" stroke="#6a7a4a" stroke-width=".7"/></svg></div>
<div class="abs" style="left:2.5px;top:333.8px;width:12px;height:12px"><svg width="12" height="12" viewBox="0 0 10 10" style="overflow:visible"><rect x="1" y="1" width="6" height="6" fill="#c8c070" stroke="#7a7040" stroke-width=".7"/><rect x="4.5" y="4.5" width="5" height="5" fill="#fff" stroke="#777" stroke-width=".7"/></svg></div>
<div class="abs" style="left:2.5px;top:347.4px;width:12px;height:12px"><svg width="12" height="12" viewBox="0 0 10 10" style="overflow:visible"><rect x="1" y="1" width="6" height="6" fill="#c8c070" stroke="#7a7040" stroke-width=".7"/><rect x="4.5" y="4.5" width="5" height="5" fill="#fff" stroke="#777" stroke-width=".7"/></svg></div>
<div class="abs" style="left:2.5px;top:359.8px;width:12px;height:12px"><svg width="12" height="12" viewBox="0 0 10 10" style="overflow:visible"><rect x="1" y="1" width="5.5" height="5.5" fill="#b8c8a0" stroke="#6a7a4a" stroke-width=".7"/><rect x="4" y="4" width="5.5" height="5.5" fill="#d8e0c8" stroke="#6a7a4a" stroke-width=".7"/></svg></div>
<div class="hsep" style="left:2px;top:99px;width:13px"></div>
<div class="hsep" style="left:2px;top:131.2px;width:13px"></div>
<div class="hsep" style="left:2px;top:163.6px;width:13px"></div>
<div class="hsep" style="left:2px;top:247.5px;width:13px"></div>
<div class="hsep" style="left:2px;top:297.9px;width:13px"></div>
<div class="hsep" style="left:2px;top:375.7px;width:13px"></div>
<div class="abs" style="left:0;top:376.5px;width:17px;height:36px;background:#f7f7f7"></div>
<div class="abs" style="left:433.3px;top:64.4px;width:274.09999999999997px;height:328.20000000000005px;border-radius:5px 5px 3px 3px;box-shadow:1px 2px 5px 1px rgba(0,0,0,.45)"></div>
<div class="abs" style="left:433.3px;top:64.4px;width:274.09999999999997px;height:328.20000000000005px;border-radius:5px 5px 3px 3px;background:rgba(232,240,246,.62);backdrop-filter:blur(2px);border:1px solid #56606c;overflow:hidden">
<div class="abs" style="left:0;top:0;width:100%;height:18px;background:linear-gradient(90deg,rgba(235,238,242,.75),rgba(225,230,236,.55) 45%,rgba(190,205,220,.25) 60%,rgba(190,205,220,.2))"></div>
</div>
<div class="abs" style="left:574.4px;top:64.6px;width:0;height:0"><svg width="70" height="20" style="position:absolute;left:0;top:0;filter:blur(1px)"><polygon points="0,0 41.3,0 58.1,18.2 12.3,18.2" fill="#c444aa"/></svg></div>
<span class="abs" style="left:438.4px;top:69.2px;font-size:7px;color:#1a1a1a;line-height:10px;white-space:nowrap">Schachtstammdaten - ISYBAU(KS) Seite 2</span>
<div class="abs" style="left:675.5px;top:65.4px;width:27.3px;height:11.5px;border-radius:0 0 4px 4px;background:linear-gradient(#e8aaa0,#d27060 45%,#c65040 55%,#cc6a58);border:1px solid #8a6a66;border-top:none"><svg width="27" height="11" style="position:absolute;left:0;top:0"><path d="M11.2,2.8 L15.8,7.4 M15.8,2.8 L11.2,7.4" stroke="#fff" stroke-width="1.5"/></svg></div>
<div class="abs" style="left:438.3px;top:82.8px;width:264.7px;height:303.5px;background:#f3f3f3;border:1px solid #b9c3cc"></div>
<div class="abs" style="left:439.3px;top:83.8px;width:57.69999999999999px;height:301.5px;background:#f5f5f5;border-right:1px solid #dddddd"></div>
<div class="abs" style="left:449.2px;top:93.1px;width:41.6px;height:12.4px;border:1px solid #9c9c9c;border-radius:2px;background:linear-gradient(#f6f6f6,#eeeeee 50%,#e2e2e2 51%,#d8d8d8);font-size:6.7px;line-height:11.9px;text-align:center;color:#111;">Seite 1</div>
<div class="abs" style="left:449.2px;top:110.9px;width:41.6px;height:12.2px;border:1px solid #9c9c9c;border-radius:2px;background:linear-gradient(#f6f6f6,#eeeeee 50%,#e2e2e2 51%,#d8d8d8);font-size:6.7px;line-height:11.7px;text-align:center;color:#111;background:#f4f4f4;border-color:#cfcfcf;color:#a8a8a8">Seite 2</div>
<div class="abs" style="left:449.2px;top:128.4px;width:41.6px;height:12.4px;border:1px solid #9c9c9c;border-radius:2px;background:linear-gradient(#f6f6f6,#eeeeee 50%,#e2e2e2 51%,#d8d8d8);font-size:6.7px;line-height:11.9px;text-align:center;color:#111;">Seite 3</div>
<div class="abs" style="left:449.2px;top:344.3px;width:41.4px;height:12.3px;border:1px solid #9c9c9c;border-radius:2px;background:linear-gradient(#f6f6f6,#eeeeee 50%,#e2e2e2 51%,#d8d8d8);font-size:6.7px;line-height:11.8px;text-align:center;color:#111;">Abbruch</div>
<div class="abs" style="left:449.2px;top:362.3px;width:41.4px;height:12.5px;border:1px solid #9c9c9c;border-radius:2px;background:linear-gradient(#f6f6f6,#eeeeee 50%,#e2e2e2 51%,#d8d8d8);font-size:6.7px;line-height:12.0px;text-align:center;color:#111;border-color:#3c7fb1;box-shadow:inset 0 0 0 1px #a8dcf4">Ok</div>
<span class="abs" style="left:505.5px;top:93.7px;font-size:6.5px;line-height:10px;color:#1a1a1a;white-space:nowrap">Schachtbezeichnung</span>
<div class="abs" style="left:624.6px;top:92.9px;width:66.5px;height:11.6px;background:#fff;border:1px solid #dedede;border-top-color:#c8c8c8;font-size:6.5px;line-height:9.6px;padding-left:4px;color:#111">19</div>
<span class="abs" style="left:505.5px;top:109.62px;font-size:6.5px;line-height:10px;color:#1a1a1a;white-space:nowrap">Deckelform</span>
<div class="abs" style="left:612.2px;top:108.32000000000001px;width:79.5px;height:12.6px;border:1px solid #9a9a9a;border-radius:2px;background:linear-gradient(#f4f4f4,#ececec 50%,#dfdfdf 51%,#d2d2d2);font-size:6.5px;line-height:11.4px;padding-left:3px;color:#111">rund<div class="arr" style="left:71px;top:4.6px"></div></div>
<span class="abs" style="left:505.5px;top:125.53999999999999px;font-size:6.5px;line-height:10px;color:#1a1a1a;white-space:nowrap">Abdeckungsklasse</span>
<div class="abs" style="left:612.2px;top:124.24px;width:79.5px;height:12.6px;border:1px solid #9a9a9a;border-radius:2px;background:linear-gradient(#f4f4f4,#ececec 50%,#dfdfdf 51%,#d2d2d2);font-size:6.5px;line-height:11.4px;padding-left:3px;color:#111">D<div class="arr" style="left:71px;top:4.6px"></div></div>
<span class="abs" style="left:505.5px;top:141.46px;font-size:6.5px;line-height:10px;color:#1a1a1a;white-space:nowrap">DN bzw. Länge Deckel</span>
<div class="abs" style="left:624.6px;top:140.66px;width:66.5px;height:11.6px;background:#fff;border:1px solid #dedede;border-top-color:#c8c8c8;font-size:6.5px;line-height:9.6px;padding-left:4px;color:#111">0.65</div>
<span class="abs" style="left:505.5px;top:157.38px;font-size:6.5px;line-height:10px;color:#1a1a1a;white-space:nowrap">Deckelbreite</span>
<div class="abs" style="left:624.6px;top:155.98px;width:67px;height:12.8px;background:#ececec;border:1px solid #cdcdcd;border-radius:1px"></div>
<span class="abs" style="left:505.5px;top:173.3px;font-size:6.5px;line-height:10px;color:#1a1a1a;white-space:nowrap">Schachtform</span>
<div class="abs" style="left:612.2px;top:172.0px;width:79.5px;height:12.6px;border:1px solid #9a9a9a;border-radius:2px;background:linear-gradient(#f4f4f4,#ececec 50%,#dfdfdf 51%,#d2d2d2);font-size:6.5px;line-height:11.4px;padding-left:3px;color:#111">rund<div class="arr" style="left:71px;top:4.6px"></div></div>
<span class="abs" style="left:505.5px;top:189.22px;font-size:6.5px;line-height:10px;color:#1a1a1a;white-space:nowrap">DN bzw. Länge Schacht</span>
<div class="abs" style="left:624.6px;top:188.42px;width:66.5px;height:11.6px;background:#fff;border:1px solid #dedede;border-top-color:#c8c8c8;font-size:6.5px;line-height:9.6px;padding-left:4px;color:#111">1.00</div>
<span class="abs" style="left:505.5px;top:205.14px;font-size:6.5px;line-height:10px;color:#1a1a1a;white-space:nowrap">Schachtbreite</span>
<div class="abs" style="left:624.6px;top:203.73999999999998px;width:67px;height:12.8px;background:#ececec;border:1px solid #cdcdcd;border-radius:1px"></div>
<span class="abs" style="left:505.5px;top:221.06px;font-size:6.5px;line-height:10px;color:#1a1a1a;white-space:nowrap">Schachthals (Konus)</span>
<div class="abs" style="left:612.2px;top:219.76px;width:79.5px;height:12.6px;border:1px solid #9a9a9a;border-radius:2px;background:linear-gradient(#f4f4f4,#ececec 50%,#dfdfdf 51%,#d2d2d2);font-size:6.5px;line-height:11.4px;padding-left:3px;color:#111">Ja<div class="arr" style="left:71px;top:4.6px"></div></div>
<span class="abs" style="left:505.5px;top:236.98000000000002px;font-size:6.5px;line-height:10px;color:#1a1a1a;white-space:nowrap">Schachtunterteilform</span>
<div class="abs" style="left:612.2px;top:235.68px;width:79.5px;height:12.6px;border:1px solid #9a9a9a;border-radius:2px;background:linear-gradient(#f4f4f4,#ececec 50%,#dfdfdf 51%,#d2d2d2);font-size:6.5px;line-height:11.4px;padding-left:3px;color:#111">rund<div class="arr" style="left:71px;top:4.6px"></div></div>
<span class="abs" style="left:505.5px;top:252.89999999999998px;font-size:6.5px;line-height:10px;color:#1a1a1a;white-space:nowrap">DN bzw. Länge Schachtunterteil</span>
<div class="abs" style="left:624.6px;top:252.09999999999997px;width:66.5px;height:11.6px;background:#fff;border:1px solid #dedede;border-top-color:#c8c8c8;font-size:6.5px;line-height:9.6px;padding-left:4px;color:#111">1.00</div>
<span class="abs" style="left:505.5px;top:268.82px;font-size:6.5px;line-height:10px;color:#1a1a1a;white-space:nowrap">Schachtunterteilbreite</span>
<div class="abs" style="left:624.6px;top:268.02px;width:66.5px;height:11.6px;background:#fff;border:1px solid #dedede;border-top-color:#c8c8c8;font-size:6.5px;line-height:9.6px;padding-left:4px;color:#111">1.00</div>
<span class="abs" style="left:505.5px;top:284.74px;font-size:6.5px;line-height:10px;color:#1a1a1a;white-space:nowrap">Schachtunterteilhöhe</span>
<div class="abs" style="left:624.6px;top:283.94px;width:66.5px;height:11.6px;background:#fff;border:1px solid #dedede;border-top-color:#c8c8c8;font-size:6.5px;line-height:9.6px;padding-left:4px;color:#111">0.00</div>
<span class="abs" style="left:505.5px;top:300.66px;font-size:6.5px;line-height:10px;color:#1a1a1a;white-space:nowrap">Schachtsohle</span>
<div class="abs" style="left:624.6px;top:299.86px;width:66.5px;height:11.6px;background:#fff;border:1px solid #dedede;border-top-color:#c8c8c8;font-size:6.5px;line-height:9.6px;padding-left:4px;color:#111">358.180</div>
<span class="abs" style="left:505.5px;top:316.58px;font-size:6.5px;line-height:10px;color:#1a1a1a;white-space:nowrap">Gerinneform</span>
<div class="abs" style="left:612.2px;top:315.28px;width:79.5px;height:12.6px;border:1px solid #9a9a9a;border-radius:2px;background:linear-gradient(#f4f4f4,#ececec 50%,#dfdfdf 51%,#d2d2d2);font-size:6.5px;line-height:11.4px;padding-left:3px;color:#111">9<div class="arr" style="left:71px;top:4.6px"></div></div>
<span class="abs" style="left:505.5px;top:332.5px;font-size:6.5px;line-height:10px;color:#1a1a1a;white-space:nowrap">Anzahl der Anschlüsse</span>
<div class="abs" style="left:624.6px;top:331.7px;width:66.5px;height:11.6px;background:#fff;border:1px solid #dedede;border-top-color:#c8c8c8;font-size:6.5px;line-height:9.6px;padding-left:4px;color:#111">1</div>
<span class="abs" style="left:505.5px;top:348.42px;font-size:6.5px;line-height:10px;color:#1a1a1a;white-space:nowrap">Baujahr</span>
<div class="abs" style="left:624.6px;top:347.62px;width:66.5px;height:11.6px;background:#fff;border:1px solid #dedede;border-top-color:#c8c8c8;font-size:6.5px;line-height:9.6px;padding-left:4px;color:#111">1900</div>
<span class="abs" style="left:505.5px;top:364.34px;font-size:6.5px;line-height:10px;color:#1a1a1a;white-space:nowrap">Bemerkung</span>
<div class="abs" style="left:624.6px;top:363.53999999999996px;width:66.5px;height:11.6px;background:#fff;border:1px solid #dedede;border-top-color:#c8c8c8;font-size:6.5px;line-height:9.6px;padding-left:4px;color:#111"></div>
</div></body></html>
